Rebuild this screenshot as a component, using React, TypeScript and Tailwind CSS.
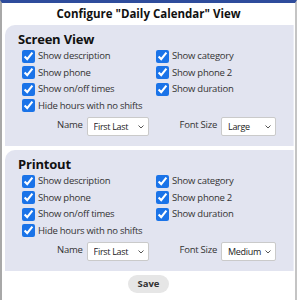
import React from "react";

function Check({ label }: { label: string }) {
  return (
    <label className="flex items-center h-[16.5px] gap-[3px] whitespace-nowrap">
      <input type="checkbox" defaultChecked className="w-[13px] h-[13px] m-0 accent-[#1a73e8]" />
      <span>{label}</span>
    </label>
  );
}

function Chevron() {
  return (
    <svg width="6" height="4" viewBox="0 0 6 4" className="absolute right-[5px] top-[8px] pointer-events-none">
      <path d="M0.5 0.5 L3 3 L5.5 0.5" stroke="#555" strokeWidth="1" fill="none" />
    </svg>
  );
}

function Select({ value, options, w }: { value: string; options: string[]; w: string }) {
  return (
    <div className={"relative h-[19px] " + w}>
      <select
        defaultValue={value}
        className="appearance-none w-full h-full bg-white border border-[#cacaca] rounded-[2px] pl-[6px] text-[9px] tracking-[-0.3px] text-[#222]"
      >
        {options.map((o) => (
          <option key={o}>{o}</option>
        ))}
      </select>
      <Chevron />
    </div>
  );
}

function Panel({ title, size }: { title: string; size: string }) {
  return (
    <div className="bg-[#e2e4f0] rounded-tl-[10px] border-r border-[#eceef6] pl-[13px] pt-[5px] pb-[10px]">
      <div className="text-[13px] font-bold leading-[18px] tracking-[-0.2px] text-[#111]">{title}</div>
      <div className="pl-[4px] grid grid-cols-[134px_1fr] text-[9.5px] tracking-[-0.25px] text-[#333]">
        <Check label="Show description" />
        <Check label="Show category" />
        <Check label="Show phone" />
        <Check label="Show phone 2" />
        <Check label="Show on/off times" />
        <Check label="Show duration" />
        <Check label="Hide hours with no shifts" />
        <div />
      </div>
      <div className="flex items-start text-[9.5px] tracking-[-0.25px] text-[#333] mt-[3px]">
        <span className="ml-[39px] mt-[1px]">Name</span>
        <div className="ml-[4px]">
          <Select value="First Last" options={["First Last", "Last, First"]} w="w-[62px]" />
        </div>
        <span className="ml-[31px] mt-[1px]">Font Size</span>
        <div className="ml-[4px]">
          <Select value={size} options={["Small", "Medium", "Large"]} w="w-[55px]" />
        </div>
      </div>
    </div>
  );
}

export default function App() {
  return (
    <div
      className="w-[297px] h-[300px] bg-white overflow-hidden flex flex-col border-t-[3px] border-t-[#2e4c9c] border-l-2 border-l-[#a8a8a8] border-r-2 border-r-[#c4c4c4]"
      style={{ fontFamily: '"Open Sans", "Noto Sans", sans-serif' }}
    >
      <div className="h-[22px] flex items-center justify-center text-[11.5px] font-bold text-[#111]">
        Configure "Daily Calendar" View
      </div>
      <div className="pl-[3px] pr-[1px] flex flex-col gap-[4px]">
        <Panel title="Screen View" size="Large" />
        <Panel title="Printout" size="Medium" />
      </div>
      <div className="flex justify-center mt-[4px]">
        <button className="w-[41px] h-[18px] rounded-full bg-[#e6e6e6] text-[9.5px] font-bold text-[#333]">
          Save
        </button>
      </div>
    </div>
  );
}
